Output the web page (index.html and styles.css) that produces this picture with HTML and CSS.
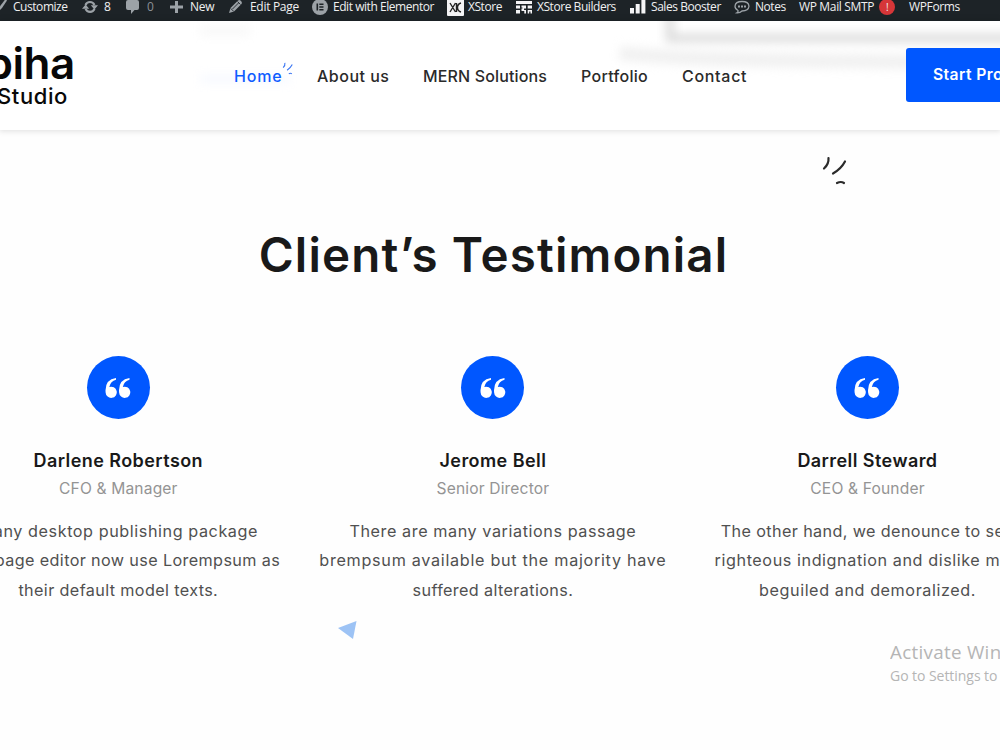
FILE: index.html
```html
<!DOCTYPE html>
<html lang="en">
<head>
    <meta charset="utf-8">
    <meta name="viewport" content="width=device-width, initial-scale=1">
    <title>Client's Testimonial</title>

    <link rel="stylesheet" href="styles.css">
</head>
<body>
<div class="adminbar">
    <div class="item customize">
        <svg class="icon" width="8" height="16" viewBox="0 0 8 16"><path d="M-2 10 L5.5 0 L7 1.500 L2 9 L-1 12z"/></svg>
        <span>Customize</span>
    </div>
    <div class="item updates">
        <svg class="icon" width="16" height="16" viewBox="0 0 16 16"><path class="line" d="M3.500 6a4.800 4.800 0 0 1 8.900 0M12.500 9.800a4.800 4.800 0 0 1-8.900 0"/><path d="M8.800 6.300H16l-3.600 4.200zM0 9.700h7.200L3.600 5.500z"/></svg>
        <span>8</span>
    </div>
    <div class="item comments">
        <svg class="icon" width="14" height="16" viewBox="0 0 14 16"><path d="M2 1h9q2 0 2 2v6q0 2-2 2H8.500L5 15v-4H2q-2 0-2-2V3q0-2 2-2z"/></svg>
        <span>0</span>
    </div>
    <div class="item new">
        <svg class="icon" width="13" height="16" viewBox="0 0 13 16"><path d="M5 2h3v4.500h5v3H8V14H5V9.500H0v-3h5z"/></svg>
        <span>New</span>
    </div>
    <div class="item edit">
        <svg class="icon" width="14" height="16" viewBox="0 0 14 16"><path d="M0 14l1.500-5L9 1.500q1.500-1 3 .5t.5 3L5 12.500z"/><path class="cut" d="M3.500 10l6-6M8.500 2.500l3 3M1.800 9.500l3 3"/></svg>
        <span>Edit Page</span>
    </div>
    <div class="item elementor">
        <svg class="icon" width="16" height="16" viewBox="0 0 16 16"><circle cx="8" cy="8" r="8"/><path class="dark" d="M4.500 4.500h1.600v7H4.500zM7.300 4.500h4.200v1.400H7.300zM7.300 7.300h4.200v1.400H7.300zM7.300 10.100h4.200v1.400H7.300z"/></svg>
        <span>Edit with Elementor</span>
    </div>
    <div class="item xstore">
        <svg class="icon white" width="17" height="17" viewBox="0 0 17 17"><rect width="17" height="17" rx="1"/><path class="xline" d="M3 4l5.500 9M8.500 4L3 13M14 4q-3.500 1-3.500 4.500T14 13M9.500 4v9"/></svg>
        <span>XStore</span>
    </div>
    <div class="item builders">
        <svg class="icon white" width="16" height="16" viewBox="0 0 16 16"><path d="M0 2h16v3H0zM0 6.600h4v3H0zM0 11h4v3.500H0zM5.500 6.600H10v3H8v1.400h2v3.500H8.300V12H5.500V9.600h1V8.500h-1zM11.700 6.600H16v3h-4.300zM11.700 11H16v3.500h-1.500v-2h-1.300v2h-1.500z"/></svg>
        <span>XStore Builders</span>
    </div>
    <div class="item booster">
        <svg class="icon white" width="16" height="16" viewBox="0 0 16 16"><path d="M0 9h4v5.500H0zM5.700 5h4v9.500h-4zM11.400 1h4v13.500h-4z"/></svg>
        <span>Sales Booster</span>
    </div>
    <div class="item notes">
        <svg class="icon" width="16" height="16" viewBox="0 0 16 16"><path class="thin" d="M3 13.800Q4.500 13 4 11.500 1 10 1 7.300 1.300 2.500 8 2.500t7 4.800q-.5 4.700-7 4.700-2 2-5 1.800z"/><path d="M4 6.500h2v2H4zM7 6.500h2v2H7zM10 6.500h2v2h-2z"/></svg>
        <span>Notes</span>
    </div>
    <div class="item smtp">
        <span>WP Mail SMTP</span>
        <b class="alert">!</b>
    </div>
    <div class="item wpforms">
        <span>WPForms</span>
    </div>
</div>

<div class="header">
    <div class="ghost">
        <svg width="1000" height="109" viewBox="0 0 1000 109">
            <path d="M670 -20 V17 H1060" stroke="#dedede" stroke-width="9" fill="none"/>
            <path d="M620 32 Q680 41 1060 41" stroke="#f1f1f1" stroke-width="14" fill="none"/>
            <path d="M200 10 H250" stroke="#f8f8f8" stroke-width="9"/>
            <path d="M200 58 H290" stroke="#f8faff" stroke-width="10"/>
        </svg>
    </div>
    <div class="logo">
        <div class="logo-name">biha</div>
        <div class="logo-sub">Studio</div>
    </div>
    <div class="nav">
        <a class="home">Home<svg class="spark" width="13" height="13" viewBox="0 0 26 30"><path d="M7 2q1 6-4 11M24 6q-4 8-12 13M16 27q4-2 7 0"/></svg></a>
        <a class="about">About us</a>
        <a class="mern">MERN Solutions</a>
        <a class="portfolio">Portfolio</a>
        <a class="contact">Contact</a>
    </div>
    <a class="start">Start Project</a>
</div>

<div class="testimonial">
    <svg class="strokes" width="26" height="30" viewBox="0 0 26 30"><path d="M4.500 2q.5 6-4.500 10.500M21 5.500q-4 7.500-12 12M13 27q4-2 7 0"/></svg>
    <h2>Client’s Testimonial</h2>
    <div class="list">
        <div class="card">
            <div class="quote">
                <svg width="26" height="22" viewBox="0 0 26 22"><path d="M11 1v1.700Q5.500 4 4.300 10a5.600 5.600 0 1 1-3.700 5.500Q-.5 2.500 11 1z"/><path d="M24.500 1v1.700Q19 4 17.800 10a5.600 5.600 0 1 1-3.700 5.500Q13 2.500 24.500 1z"/></svg>
            </div>
            <h3>Darlene Robertson</h3>
            <div class="role">CFO &amp; Manager</div>
            <p>Many desktop publishing package<br><span class="tight">web page editor now use Lorempsum as</span><br><span class="tight">their default model texts.</span></p>
        </div>
        <div class="card">
            <div class="quote">
                <svg width="26" height="22" viewBox="0 0 26 22"><path d="M11 1v1.700Q5.500 4 4.300 10a5.600 5.600 0 1 1-3.700 5.500Q-.5 2.500 11 1z"/><path d="M24.500 1v1.700Q19 4 17.800 10a5.600 5.600 0 1 1-3.700 5.500Q13 2.500 24.500 1z"/></svg>
            </div>
            <h3>Jerome Bell</h3>
            <div class="role">Senior Director</div>
            <p>There are many variations passage<br><span class="loose">brempsum available but the majority have</span><br><span class="tight">suffered alterations.</span></p>
        </div>
        <div class="card">
            <div class="quote">
                <svg width="26" height="22" viewBox="0 0 26 22"><path d="M11 1v1.700Q5.500 4 4.300 10a5.600 5.600 0 1 1-3.700 5.500Q-.5 2.500 11 1z"/><path d="M24.500 1v1.700Q19 4 17.800 10a5.600 5.600 0 1 1-3.700 5.500Q13 2.500 24.500 1z"/></svg>
            </div>
            <h3>Darrell Steward</h3>
            <div class="role">CEO &amp; Founder</div>
            <p><span class="tight">The other hand, we denounce to see</span><br>righteous indignation and dislike men<br>beguiled and demoralized.</p>
        </div>
    </div>
    <svg class="triangle" width="20" height="20" viewBox="0 0 20 20"><path d="M0 8 L18.500 1 L15 19z"/></svg>
</div>

<div class="activate">
    <div class="activate-title">Activate Windows</div>
    <div class="activate-text">Go to Settings to activate Windows.</div>
</div>
</body>
</html>
```
FILE: styles.css
```css
* {
    box-sizing: border-box;
}

body {
    margin: 0px;
    width: 1000px;
    height: 750px;
    position: relative;
    overflow: hidden;
    background-color: #fefefe;
    font-family: Inter, "Liberation Sans", sans-serif;
    color: #191919;
}

.adminbar {
    display: grid;
    grid-template-columns: 82px 44px 44px 59px 83px 135px 69px 114px 104px 65px 110px 91px;
    height: 21px;
    background-color: #1d2327;
    color: #f0f0f1;
    font: 12px/14px "Open Sans", sans-serif;
    letter-spacing: -0.45px;
    overflow: hidden;
}

.adminbar .item {
    display: flex;
    align-items: center;
    height: 14px;
    gap: 6px;
    white-space: nowrap;
}

.adminbar .customize {
    gap: 5px;
}

.adminbar .comments span {
    color: #8c9196;
    margin-left: 1px;
}

.adminbar .new,
.adminbar .edit {
    gap: 7px;
    letter-spacing: -0.3px;
}

.adminbar .xstore {
    gap: 4px;
}

.adminbar .elementor,
.adminbar .builders,
.adminbar .booster,
.adminbar .notes,
.adminbar .smtp {
    gap: 5px;
}

.adminbar .smtp,
.adminbar .wpforms {
    letter-spacing: -0.35px;
}

.icon {
    flex: none;
    fill: #9ca2a7;
}

.icon.white {
    fill: #f4f4f6;
}

.icon .line {
    fill: none;
    stroke: #9ca2a7;
    stroke-width: 2.2;
}

.icon .thin {
    fill: none;
    stroke: #9ca2a7;
    stroke-width: 1.3;
}

.icon .cut {
    stroke: #1d2327;
    stroke-width: 0.9;
}

.icon .dark {
    fill: #1d2327;
}

.icon .xline {
    fill: none;
    stroke: #222;
    stroke-width: 1.4;
}

.adminbar .alert {
    width: 16px;
    height: 16px;
    border-radius: 50%;
    background-color: #d63638;
    font-size: 10px;
    font-weight: 400;
    line-height: 16px;
    text-align: center;
}

.header {
    position: relative;
    display: flex;
    height: 109px;
    background-color: #fff;
    box-shadow: 0 0 6px 1px rgba(0, 0, 0, 0.13);
}

.ghost {
    position: absolute;
    top: 0;
    left: 0;
    width: 1000px;
    height: 109px;
    overflow: hidden;
}

.ghost svg {
    overflow: visible;
    filter: blur(5px);
}

.logo {
    position: relative;
    display: flex;
    flex-direction: column;
    align-items: flex-end;
    width: 75px;
    flex: none;
    padding-top: 19px;
    color: #080808;
}

.logo-name {
    font-size: 44px;
    font-weight: 600;
    line-height: 46px;
    letter-spacing: -0.4px;
}

.logo-sub {
    margin-right: 7px;
    font-size: 22px;
    font-weight: 500;
    line-height: 20px;
    letter-spacing: 0.6px;
}

.nav {
    position: relative;
    display: grid;
    grid-template-columns: 83px 106px 158px 101px 224px;
    flex: none;
    margin-left: 159px;
    padding-top: 44px;
    font-size: 16px;
    font-weight: 500;
    line-height: 22px;
    white-space: nowrap;
    color: #2a2a2a;
}

.nav .home {
    position: relative;
    letter-spacing: 0.8px;
    color: #0f5cff;
}

.nav .about {
    letter-spacing: 0.5px;
}

.nav .mern {
    letter-spacing: 0.15px;
}

.nav .portfolio {
    letter-spacing: 0.3px;
}

.nav .contact {
    letter-spacing: 0.7px;
}

.spark {
    position: absolute;
    left: 47px;
    top: -3px;
    fill: none;
    stroke: #3c77f2;
    stroke-width: 2.6;
}

.start {
    position: relative;
    flex: 1;
    min-width: 0;
    height: 54px;
    margin-top: 27px;
    padding-left: 27px;
    border-radius: 3px 0 0 3px;
    background-color: #0057ff;
    color: #fff;
    font-size: 15.7px;
    font-weight: 600;
    line-height: 53px;
    letter-spacing: 0.4px;
    white-space: nowrap;
    overflow: hidden;
}

.testimonial {
    position: relative;
    padding-top: 95px;
}

.strokes {
    position: absolute;
    left: 824px;
    top: 26px;
    overflow: visible;
    fill: none;
    stroke: #2b2b2b;
    stroke-width: 2.2;
    stroke-linecap: round;
}

.testimonial h2 {
    margin: 0px;
    width: 987px;
    text-align: center;
    font-size: 47.5px;
    font-weight: 600;
    line-height: 60px;
    letter-spacing: 1.15px;
    white-space: nowrap;
}

.list {
    display: grid;
    grid-template-columns: repeat(3, 374.6px);
    margin-left: -69px;
    padding-top: 71px;
}

.card {
    display: flex;
    flex-direction: column;
    align-items: center;
    text-align: center;
    white-space: nowrap;
}

.quote {
    display: flex;
    align-items: center;
    justify-content: center;
    width: 63px;
    height: 63px;
    border-radius: 50%;
    background-color: #0057ff;
}

.quote svg {
    fill: #fff;
}

.card h3 {
    margin: 28px 0 0;
    font-size: 18px;
    font-weight: 600;
    line-height: 28px;
    letter-spacing: 0.43px;
}

.role {
    font-size: 15.6px;
    line-height: 28px;
    letter-spacing: 0.15px;
    color: #949494;
}

.card p {
    margin: 14px 0 0;
    font-size: 16.2px;
    line-height: 29.4px;
    letter-spacing: 0.57px;
    color: #505050;
}

.card .tight {
    letter-spacing: 0.37px;
}

.card .loose {
    letter-spacing: 0.7px;
}

.triangle {
    position: absolute;
    left: 338px;
    top: 490px;
    fill: #9dc3f5;
}

.activate {
    position: absolute;
    left: 890px;
    top: 640px;
    width: 110px;
    overflow: hidden;
    font-family: "Open Sans", sans-serif;
    color: #b5b5b5;
    white-space: nowrap;
}

.activate-title {
    font-size: 18.8px;
    line-height: 25px;
    letter-spacing: 0.3px;
}

.activate-text {
    font-size: 14px;
    line-height: 21px;
    letter-spacing: -0.05px;
}
```
